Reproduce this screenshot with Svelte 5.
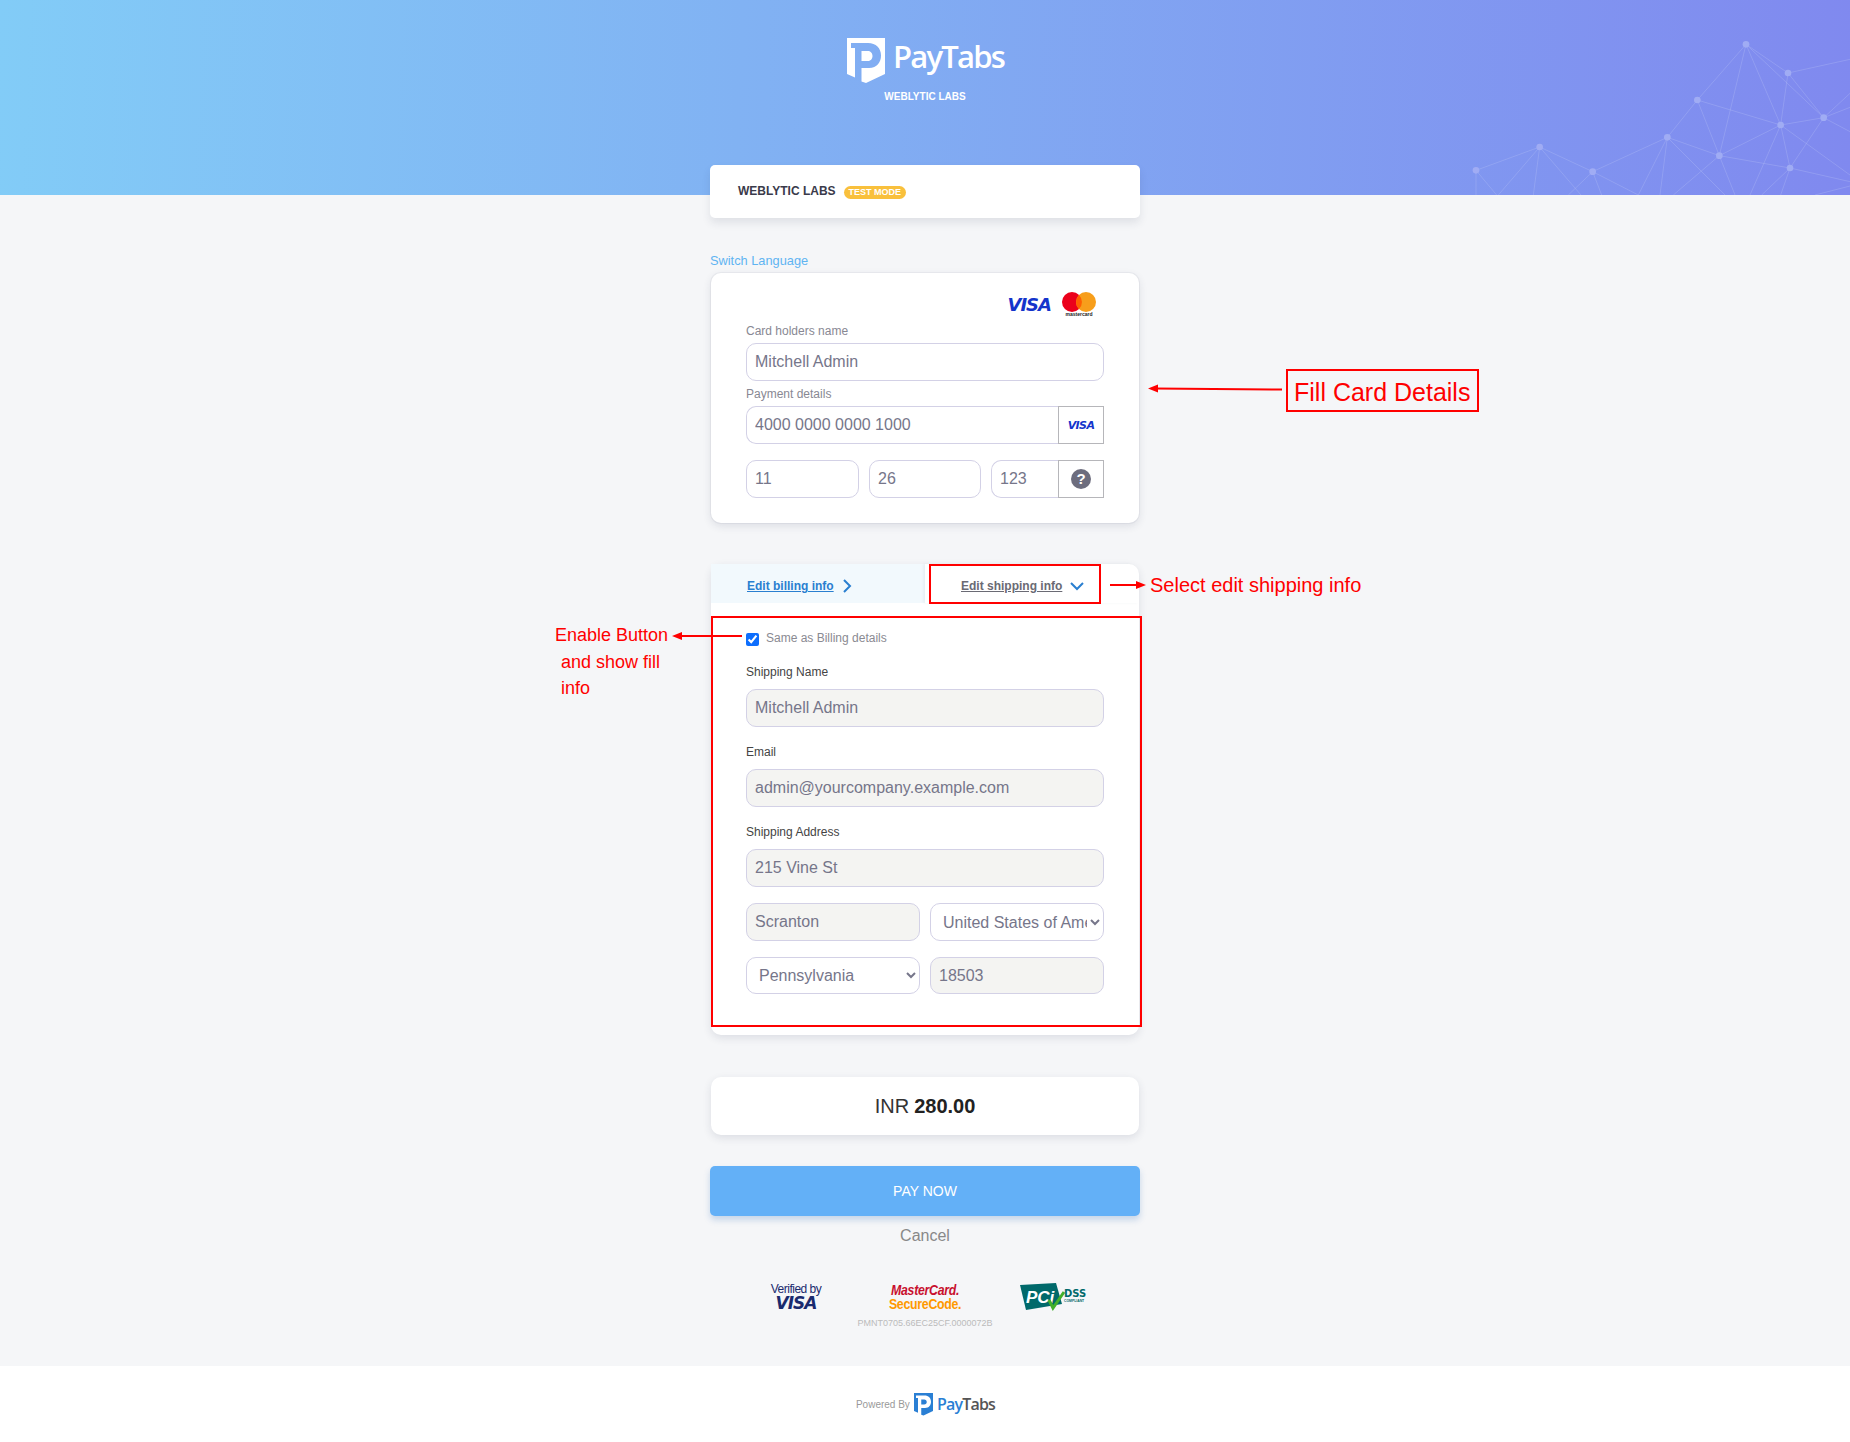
<script lang="ts">
  // node positions traced off the header artwork
  const meshLines = [
    [1038,133,892,300],[1038,133,1164,219],[1038,133,1271,353],[1038,133,1142,375],[1038,133,958,467],
    [1164,219,1350,178],[1164,219,1142,375],[1164,219,1271,353],[892,300,1142,375],[892,300,958,467],
    [892,300,802,412],[1271,353,1142,375],[1271,353,1170,504],[1271,353,1350,280],[1271,353,1350,322],
    [1271,353,1350,395],[1142,375,958,467],[1142,375,1170,504],[1142,375,1050,585],[1142,375,1350,525],
    [802,412,958,467],[802,412,715,585],[802,412,780,585],[802,412,975,585],[958,467,1170,504],
    [958,467,820,585],[958,467,1005,585],[1170,504,1350,545],[1170,504,1085,585],[1170,504,1142,585],
    [802,412,578,515],[578,515,419,441],[578,515,505,585],[578,515,605,585],[578,515,715,585],
    [419,441,228,511],[419,441,295,585],[419,441,400,585],[419,441,543,585],[228,511,228,585],
    [228,511,290,585],[1245,585,1350,558]
  ]
  const meshNodes = [
    [1038,133],[1164,219],[892,300],[1271,353],[1142,375],[802,412],[958,467],[1170,504],[419,441],[578,515],[228,511]
  ]
  const shield = 'M0 0H38V36L19 45L14.5 43.5V30H22C30 30 34 24 34 17.5C34 10 29 5 21 5H4V10H8V39.5L0 36ZM14.5 13H20.5C23.5 13 25.5 15 25.5 18C25.5 21 23.5 23 20.5 23H14.5Z'
</script>

<div class="page">
  <header class="hero">
    <svg class="mesh" viewBox="0 0 1350 585" aria-hidden="true">
      {#each meshLines as l}
        <line x1={l[0]} y1={l[1]} x2={l[2]} y2={l[3]} />
      {/each}
      {#each meshNodes as n}
        <circle cx={n[0]} cy={n[1]} r="10" />
      {/each}
    </svg>
    <div class="brand">
      <svg class="brand-mark" viewBox="0 0 38 46"><path d={shield} fill="#fff" /></svg>
      <span class="brand-name">PayTabs</span>
    </div>
    <div class="merchant">WEBLYTIC LABS</div>
  </header>

  <main class="col">
    <section class="merchant-card">
      <strong>WEBLYTIC LABS</strong>
      <span class="badge">TEST MODE</span>
    </section>

    <div class="switch-lang">Switch Language</div>

    <section class="card pay-card">
      <div class="card-logos">
        <span class="visa">VISA</span>
        <svg class="mc" viewBox="0 0 34 26" width="34" height="26">
          <circle cx="10" cy="11" r="10" fill="#eb001b" />
          <circle cx="24" cy="11" r="10" fill="#f79e1b" />
          <path d="M17 3.9a10 10 0 0 1 0 14.2a10 10 0 0 1 0-14.2Z" fill="#ff5f00" />
          <text x="17" y="25" text-anchor="middle">mastercard</text>
        </svg>
      </div>
      <label class="lbl" for="holder">Card holders name</label>
      <input id="holder" class="field gap" value="Mitchell Admin" readonly />
      <label class="lbl" for="number">Payment details</label>
      <div class="group gap-lg">
        <input id="number" class="field" value="4000 0000 0000 1000" readonly />
        <span class="addon"><span class="visa small">VISA</span></span>
      </div>
      <div class="expiry">
        <input class="field" value="11" readonly />
        <input class="field" value="26" readonly />
        <div class="group">
          <input class="field" value="123" readonly />
          <span class="addon"><span class="help">?</span></span>
        </div>
      </div>
    </section>

    <section class="card info-card">
      <div class="tabs">
        <div class="tab billing">
          <span>Edit billing info</span>
          <svg width="10" height="14" viewBox="0 0 10 14"><path d="M2 1l6 6-6 6" /></svg>
        </div>
        <div class="tab shipping">
          <span>Edit shipping info</span>
          <svg width="14" height="10" viewBox="0 0 14 10"><path d="M1 2l6 6 6-6" /></svg>
        </div>
      </div>
      <div class="info-body">
        <label class="same"><input type="checkbox" checked />Same as Billing details</label>
        <label class="lbl dark" for="s-name">Shipping Name</label>
        <input id="s-name" class="field locked gap-md" value="Mitchell Admin" readonly />
        <label class="lbl dark" for="s-mail">Email</label>
        <input id="s-mail" class="field locked gap-md" value="admin@yourcompany.example.com" readonly />
        <label class="lbl dark" for="s-addr">Shipping Address</label>
        <input id="s-addr" class="field locked gap-lg" value="215 Vine St" readonly />
        <div class="two gap-lg">
          <input class="field locked" value="Scranton" readonly />
          <select class="field pick"><option>United States of America</option></select>
        </div>
        <div class="two short">
          <select class="field pick"><option>Pennsylvania</option></select>
          <input class="field locked" value="18503" readonly />
        </div>
      </div>
      <div class="mark-box tab-mark"></div>
      <div class="mark-box form-mark"></div>
    </section>

    <section class="card amount">INR <b>280.00</b></section>

    <button class="pay">PAY NOW</button>
    <div class="cancel">Cancel</div>

    <div class="seals">
      <div class="seal-visa"><span>Verified by</span><b>VISA</b></div>
      <div class="seal-mc"><b>MasterCard.</b><b class="sc">SecureCode.</b></div>
      <svg class="seal-pci" width="68" height="28" viewBox="0 0 68 28">
        <path d="M0 2L36 0L42 21L6 27Z" fill="#00696b" />
        <text x="6" y="20" class="pci">PCi</text>
        <path d="M29 17L33 25L44 9" fill="none" stroke="#43b02a" stroke-width="3" />
        <text x="44" y="14" class="dss">DSS</text>
        <text x="44" y="18.5" class="comp">COMPLIANT</text>
      </svg>
    </div>
    <div class="ref">PMNT0705.66EC25CF.0000072B</div>
  </main>

  <footer class="foot">
    <span class="powered">Powered By</span>
    <svg class="foot-mark" viewBox="0 0 38 46"><path d={shield} fill="#2a7fd4" /></svg>
    <span class="foot-name"><i>Pay</i>Tabs</span>
  </footer>

  <svg class="arrows" width="1850" height="1442" aria-hidden="true">
    <line x1="1282" y1="389.5" x2="1155" y2="388.5" />
    <path d="M1148 388.5l10-4v8Z" />
    <line x1="1110" y1="585" x2="1138" y2="585" />
    <path d="M1146 585l-10-4v8Z" />
    <line x1="742" y1="636" x2="680" y2="636" />
    <path d="M672 636l10-4v8Z" />
  </svg>
  <div class="note boxed">Fill Card Details</div>
  <div class="note ship-note">Select edit shipping info</div>
  <div class="note enable-note">Enable Button<span>and show fill</span><span>info</span></div>
</div>

<style>
  :global(body) { margin: 0; background: #f5f6f8; font-family: "Liberation Sans", Arial, sans-serif; }
  .page { position: relative; width: 1850px; height: 1442px; overflow: hidden; display: flex; flex-direction: column; }

  .hero { position: relative; height: 195px; flex: none; background: linear-gradient(92deg, #82ccf7 0%, #81b2f3 40%, #8089ef 100%); text-align: center; }
  .mesh { position: absolute; right: 0; top: 0; width: 450px; height: 195px; }
  .mesh line { stroke: #b9c4f7; stroke-width: 2; opacity: .45; }
  .mesh circle { fill: #a0acf4; }
  .brand { display: flex; justify-content: center; align-items: flex-start; gap: 8px; padding: 38px 0 0 1px; height: 46px; }
  .brand-mark { width: 38px; height: 46px; }
  .brand-name { color: #fff; font: 600 31px/40px "Open Sans", sans-serif; letter-spacing: -1.8px; margin-top: -2px; }
  .merchant { margin-top: 6px; color: #fff; font-size: 10px; font-weight: 700; line-height: 14px; }

  .col { width: 430px; margin: 0 auto; flex: 1; }
  .merchant-card { height: 53px; margin-top: -30px; position: relative; padding-left: 28px; display: flex; align-items: center; gap: 8px; box-sizing: border-box; background: #fff; border-radius: 5px; box-shadow: 0 5px 8px rgba(40,50,80,.1); color: #3a3a4a; font-size: 12px; padding-bottom: 2px; }
  .badge { background: #f9c03c; color: #fff; font-size: 9px; font-weight: 700; border-radius: 7px; padding: 0 5px; line-height: 13px; margin-top: 3px; }
  .switch-lang { margin-top: 34px; height: 17px; line-height: 17px; margin-bottom: 4px; color: #5fb4f2; font-size: 12.8px; }

  .card { position: relative; box-sizing: border-box; margin: 0 1px; background: #fff; border-radius: 10px; box-shadow: 0 3px 8px rgba(40,50,80,.12); }
  .pay-card { height: 250px; padding: 18px 35px 25px; box-shadow: 0 0 0 1px rgba(60,60,90,.05), 0 3px 8px rgba(40,50,80,.12); }
  .card-logos { height: 26px; display: flex; justify-content: flex-end; align-items: flex-start; gap: 11px; margin: 0 8px 7px 0; }
  .visa { font: italic 700 18px/22px "DejaVu Sans", sans-serif; color: #1434cb; letter-spacing: -1px; margin-top: 3px; }
  .visa.small { font-size: 11px; line-height: 12px; letter-spacing: -.6px; margin: 1px 0 0; }
  .mc text { font: 700 5px "Liberation Sans", sans-serif; fill: #222; }

  .lbl { display: block; height: 14px; line-height: 14px; font-size: 12px; color: #888893; margin-bottom: 5px; }
  .lbl.dark { color: #444; margin-bottom: 10px; }
  .field { display: block; width: 100%; box-sizing: border-box; height: 38px; padding: 0 8px; border: 1px solid #d3d1e6; border-radius: 10px; background: #fff; font: 16px "Liberation Sans", sans-serif; color: #76768a; outline: none; }
  .gap { margin-bottom: 6px; }
  .gap-md { margin-bottom: 18px; }
  .gap-lg { margin-bottom: 16px; }

  .group { display: flex; }
  .group .field { flex: 1; min-width: 0; border-radius: 10px 0 0 10px; border-right: 0; }
  .addon { flex: none; width: 46px; height: 38px; box-sizing: border-box; border: 1px solid #b6b6ba; display: flex; align-items: center; justify-content: center; }
  .help { width: 20px; height: 20px; border-radius: 50%; background: #6d6d7e; color: #fff; font-size: 15px; font-weight: 700; line-height: 20px; text-align: center; }
  .expiry { display: grid; grid-template-columns: 113px 112px 113px; gap: 10px; }

  .info-card { margin-top: 41px; height: 471px; }
  .tabs { display: grid; grid-template-columns: 214px 1fr; height: 39px; }
  .tab { display: flex; align-items: center; gap: 8px; padding: 5px 0 0 36px; font-size: 12px; font-weight: 700; text-decoration: underline; }
  .tab svg { fill: none; stroke: #2a7fd0; stroke-width: 2; }
  .billing { background: #f2f9fd; color: #2a7fd0; }
  .shipping { color: #6a6a74; border-top-right-radius: 10px; box-shadow: -2px 0 3px rgba(40,50,80,.05); }
  .info-body { padding: 28px 35px 0; }
  .same { display: flex; align-items: center; height: 14px; font-size: 12px; color: #8a8a92; margin-bottom: 20px; }
  .same input { width: 13px; height: 13px; margin: 2px 7px 0 0; accent-color: #0d6efd; }
  .locked { background: #f4f4f2; }
  .two { display: grid; grid-template-columns: 174px 174px; gap: 10px; }
  .short .field { height: 37px; }
  .pick { padding-right: 0; }
  .mark-box { position: absolute; box-sizing: border-box; border: 2px solid #f00; }
  .tab-mark { left: 218px; top: 0; width: 172px; height: 40px; }
  .form-mark { left: 0; top: 52px; width: 431px; height: 411px; }

  .amount { margin-top: 42px; height: 58px; display: flex; align-items: center; justify-content: center; gap: 5px; font-size: 20px; color: #333; }
  .amount b { color: #222; }

  .pay { display: block; width: 100%; height: 50px; margin-top: 31px; padding-bottom: 2px; border: 0; border-radius: 5px; background: #63b0f7; color: #fff; font: 14px "Liberation Sans", sans-serif; box-shadow: 0 4px 6px rgba(60,120,190,.25); }
  .cancel { margin-top: 11px; height: 18px; line-height: 18px; text-align: center; font-size: 16px; color: #888; }

  .seals { display: grid; grid-template-columns: repeat(3, 129px); justify-content: center; justify-items: center; margin-top: 38px; height: 28px; }
  .seal-visa { display: flex; flex-direction: column; align-items: center; color: #1a2a6e; font-size: 12px; line-height: 13px; letter-spacing: -.5px; }
  .seal-visa b { font: italic 700 17px/15px "DejaVu Sans", sans-serif; letter-spacing: -1px; }
  .seal-mc { display: flex; flex-direction: column; align-items: center; color: #c8102e; font: italic 700 13px/13px "Liberation Sans", sans-serif; letter-spacing: -.3px; transform: scale(.95, 1.1); transform-origin: center top; }
  .seal-mc .sc { color: #f90; font-style: normal; }
  .pci { font: italic 700 17px "Liberation Sans", sans-serif; fill: #fff; }
  .dss { font: 700 10px "DejaVu Sans", sans-serif; fill: #00696b; }
  .comp { font: 700 3.4px "Liberation Sans", sans-serif; fill: #00696b; }
  .ref { margin-top: 6px; text-align: center; font-size: 9px; line-height: 12px; color: #bbb; }

  .foot { flex: none; height: 76px; background: #fff; display: flex; align-items: center; justify-content: center; padding-left: 1px; }
  .powered { font-size: 10px; color: #999; margin-right: 4px; }
  .foot-mark { width: 19px; height: 23px; }
  .foot-name { margin-left: 4px; font: 600 16px "Open Sans", sans-serif; color: #555; letter-spacing: -.8px; }
  .foot-name i { font-style: normal; color: #2a7fd4; }

  .arrows { position: absolute; left: 0; top: 0; pointer-events: none; }
  .arrows line { stroke: #f00; stroke-width: 2; }
  .arrows path { fill: #f00; }
  .note { position: absolute; color: #f00; }
  .boxed { left: 1286px; top: 369px; width: 193px; height: 43px; box-sizing: border-box; border: 2px solid #f00; font-size: 25px; line-height: 43px; padding-left: 6px; white-space: nowrap; }
  .ship-note { left: 1150px; top: 573px; font-size: 20px; line-height: 24px; }
  .enable-note { left: 555px; top: 622px; font-size: 18px; line-height: 26.5px; }
  .enable-note span { display: block; padding-left: 6px; }
</style>
